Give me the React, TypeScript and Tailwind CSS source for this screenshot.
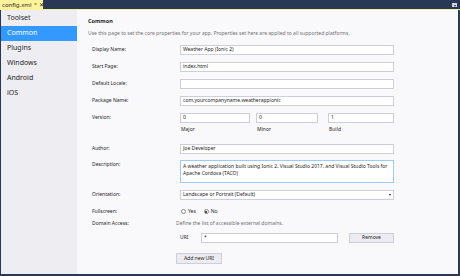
import React from "react";

const NAV = ["Toolset", "Common", "Plugins", "Windows", "Android", "iOS"];

function Field({ value = "", className = "" }: { value?: string; className?: string }) {
  return (
    <div className={`h-[10px] bg-white border border-[#cccedb] px-[2px] flex items-center text-[5px] text-[#1e1e1e] whitespace-nowrap overflow-hidden ${className}`}>
      {value}
    </div>
  );
}

function Row({ label, children, className = "" }: { label: string; children?: React.ReactNode; className?: string }) {
  return (
    <div className={`flex items-start ${className}`}>
      <div className="w-[92px] pl-[4px] h-[10px] flex items-center shrink-0">{label}</div>
      <div className="w-[214px]">{children}</div>
    </div>
  );
}

function Radio({ checked, label }: { checked?: boolean; label: string }) {
  return (
    <div className="flex items-center gap-[2px]">
      <span className="w-[5px] h-[5px] rounded-full border border-[#8a8a8a] bg-white flex items-center justify-center">
        {checked && <span className="w-[2px] h-[2px] rounded-full bg-[#1e1e1e]" />}
      </span>
      <span>{label}</span>
    </div>
  );
}

export default function App() {
  return (
    <div className="w-[460px] h-[276px] flex flex-col bg-[#293955] font-['Noto_Sans',sans-serif] overflow-hidden">
      {/* document tab strip */}
      <div className="h-[9px] flex items-stretch justify-between shrink-0">
        <div className="bg-[#fff29d] w-[43px] flex items-center pl-[2px] gap-[3px] text-[6px] text-[#1e1e1e] leading-none">
          <span>config.xml</span>
          <span className="text-[5px]">ᵖ</span>
          <span className="text-[6px]">✕</span>
        </div>
        <div className="flex items-center pr-[3px]">
          <span className="w-[5px] h-[4px] bg-[#cfd6e5] flex items-end justify-center">
            <span className="w-0 h-0 border-l-[1.5px] border-r-[1.5px] border-t-[2px] border-l-transparent border-r-transparent border-t-[#293955]" />
          </span>
        </div>
      </div>
      <div className="h-[1px] bg-[#fff29d] shrink-0" />

      <div className="flex-1 flex ml-[1px] mr-[2px] mb-[2px] min-h-0">
        {/* sidebar */}
        <div className="w-[76px] bg-[#eeeef2] pt-[1px] shrink-0">
          {NAV.map(n => (
            <div
              key={n}
              className={`h-[15px] flex items-center pl-[6px] text-[7px] ${n === "Common" ? "bg-[#3399ff] text-white" : "text-[#1e1e1e]"}`}
            >
              {n}
            </div>
          ))}
        </div>

        {/* properties page */}
        <div className="flex-1 bg-[#f9f9fb] pl-[11px] pt-[9px] text-[5px] text-[#1e1e1e] leading-none">
          <div className="font-bold text-[5.5px]">Common</div>
          <div className="mt-[6px] text-[#717171] whitespace-nowrap">
            Use this page to set the core properties for your app. Properties set here are applied to all supported platforms.
          </div>

          <div className="mt-[9px] flex flex-col gap-[7px]">
            <Row label="Display Name:"><Field value="Weather App (Ionic 2)" /></Row>
            <Row label="Start Page:"><Field value="index.html" /></Row>
            <Row label="Default Locale:"><Field /></Row>
            <Row label="Package Name:"><Field value="com.yourcompanyname.weatherappionic" /></Row>
            <Row label="Version:">
              <div className="flex">
                <div className="w-[70px]">
                  <Field value="0" />
                  <div className="mt-[4px] pl-[1px]">Major</div>
                </div>
                <div className="w-[62px] ml-[6px]">
                  <Field value="0" />
                  <div className="mt-[4px] pl-[1px]">Minor</div>
                </div>
                <div className="flex-1 ml-[10px]">
                  <Field value="1" />
                  <div className="mt-[4px] pl-[1px]">Build</div>
                </div>
              </div>
            </Row>
          </div>

          <Row label="Author:" className="mt-[12px]"><Field value="Joe Developer" /></Row>
          <Row label="Description:" className="mt-[6px]">
            <div className="h-[23px] bg-white border border-[#9ccbf5] px-[2px] pt-[2px] leading-[7px]">
              A weather application built using Ionic 2, Visual Studio 2017, and Visual Studio Tools for Apache Cordova (TACO)
            </div>
          </Row>
          <Row label="Orientation:" className="mt-[7px]">
            <div className="h-[10px] bg-white border border-[#cccedb] px-[2px] flex items-center justify-between">
              <span>Landscape or Portrait (Default)</span>
              <span className="w-0 h-0 border-l-[1.5px] border-r-[1.5px] border-t-[2px] border-l-transparent border-r-transparent border-t-[#1e1e1e]" />
            </div>
          </Row>
          <Row label="Fullscreen:" className="mt-[7px]">
            <div className="h-[10px] flex items-center gap-[8px] pl-[1px]">
              <Radio label="Yes" />
              <Radio checked label="No" />
            </div>
          </Row>
          <div className="mt-[2px] flex items-center">
            <div className="w-[88px] pl-[4px] shrink-0 h-[10px] flex items-center">Domain Access:</div>
            <div className="text-[#717171]">Define the list of accessible external domains.</div>
          </div>
          <div className="mt-[4px] flex items-center">
            <div className="w-[92px] shrink-0" />
            <div className="w-[21px]">URI</div>
            <Field value="*" className="w-[137px]" />
            <div className="ml-[11px] w-[45px] h-[10px] bg-[#ececf0] border border-[#cccedb] flex items-center justify-center">Remove</div>
          </div>
          <div className="mt-[10px] ml-[88px] w-[46px] h-[11px] bg-[#ececf0] border border-[#cccedb] flex items-center justify-center">
            Add new URI
          </div>
        </div>
      </div>
    </div>
  );
}
